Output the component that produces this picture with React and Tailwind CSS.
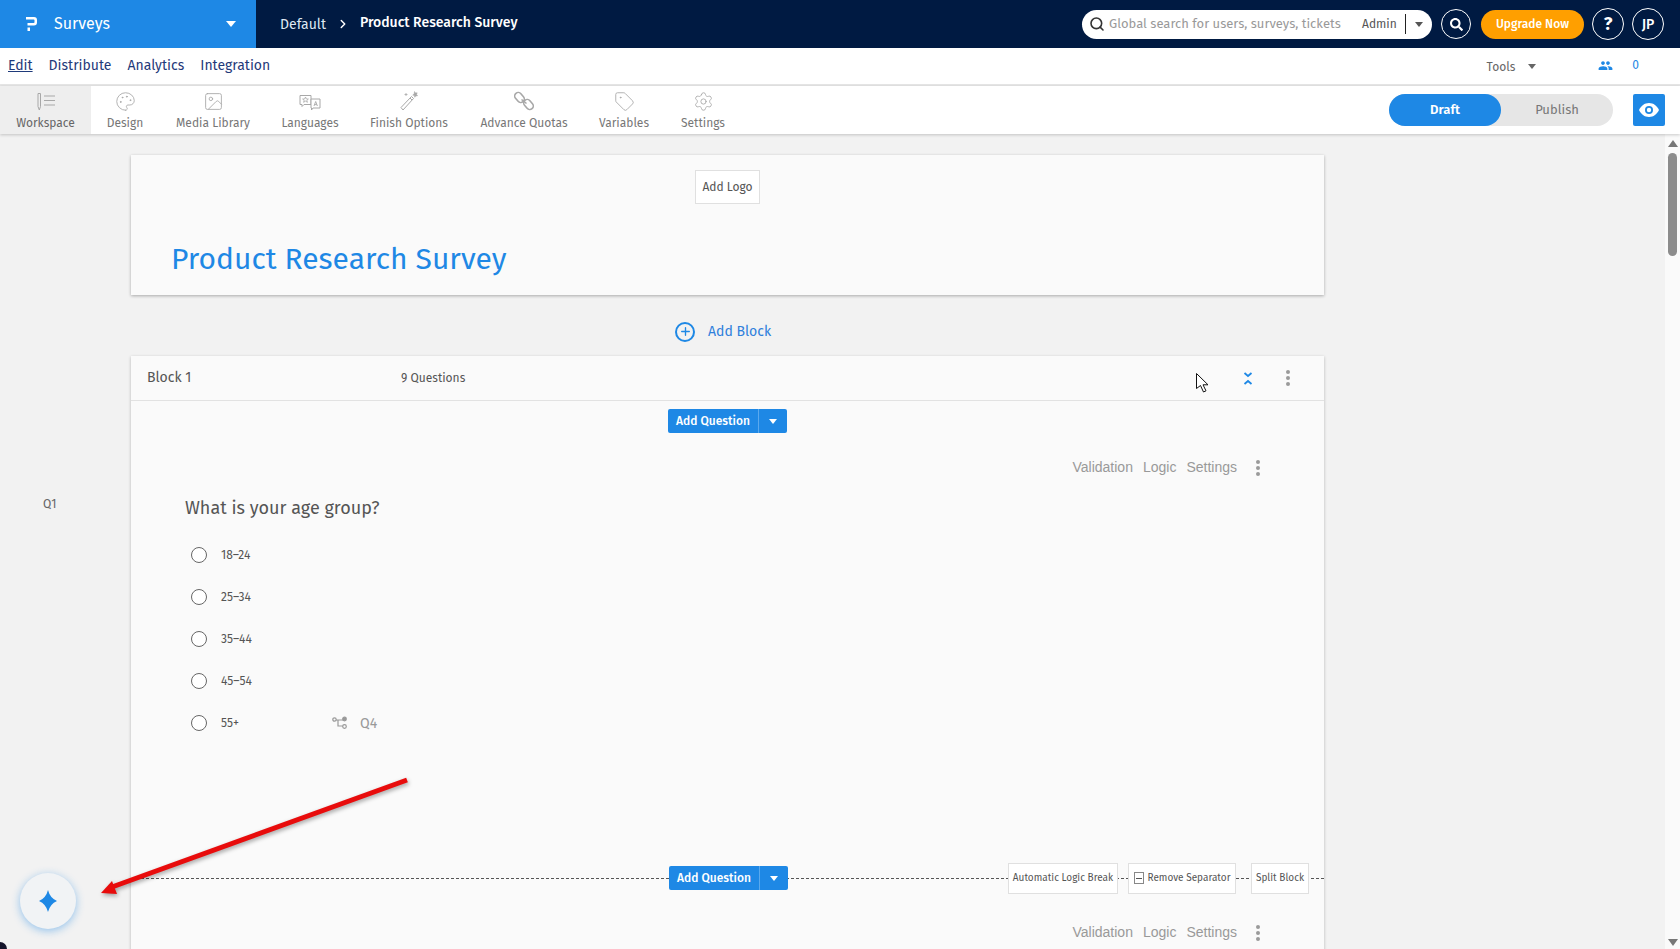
import { Search, ChevronRight, Palette, Image, Tag, Settings, Plus } from 'lucide-react';
import { FaSearch } from 'react-icons/fa';
import { MdPeople } from 'react-icons/md';

const font = "font-['Fira_Sans','Lato','Liberation_Sans',sans-serif]";

function LanguagesIcon() {
  return (
    <svg width="22" height="20" viewBox="0 0 22 20" fill="none" stroke="#a8a8a8" strokeWidth="1">
      <path d="M1 3.500h11v9H5l-2 2v-2H1z" />
      <path d="M6.500 5l.9 2h2l-1.600 1.300.6 2-1.900-1.200-1.900 1.200.6-2L3.600 7h2z" strokeWidth="0.8" />
      <path d="M12 7h9v9h-7l-1.500 2v-2H12z" fill="#fff" />
      <path d="M15 14l1.700-4.500 1.700 4.500M15.600 12.600h2.200" strokeWidth="0.9" />
    </svg>
  );
}

function WandIcon() {
  return (
    <svg width="20" height="22" viewBox="0 0 20 22" fill="none" stroke="#a8a8a8" strokeWidth="1">
      <path d="M2 17.500L12.500 6.500l2 2L4 20z" />
      <path d="M11 8l2 2" />
      <path d="M15.500 1.500l1 1.500 1.700-.2-.6 1.600 1 1.400-1.800.1-1 1.400-.5-1.700-1.600-.5 1.400-1z" fill="#a8a8a8" strokeWidth="0.5" />
      <path d="M7 3v3M5.500 4.500h3" strokeWidth="0.8" />
    </svg>
  );
}

function ChainIcon() {
  return (
    <svg width="20" height="22" viewBox="0 0 20 22" fill="none" stroke="#a8a8a8" strokeWidth="1.6">
      <rect x="2" y="2" width="7" height="11" rx="3.500" transform="rotate(-40 5.500 7.500)" />
      <rect x="11" y="9" width="7" height="11" rx="3.500" transform="rotate(-40 14.500 14.500)" />
      <path d="M7.500 9.500l5 4" />
    </svg>
  );
}

const tools = [
  { label: 'Design', w: 'w-[68px]', icon: <Palette size={21} strokeWidth={1} className="text-[#a8a8a8]" /> },
  { label: 'Media Library', w: 'w-[108px]', icon: <Image size={21} strokeWidth={1} className="text-[#a8a8a8]" /> },
  { label: 'Languages', w: 'w-[86px]', icon: <LanguagesIcon /> },
  { label: 'Finish Options', w: 'w-[112px]', icon: <WandIcon /> },
  { label: 'Advance Quotas', w: 'w-[118px]', icon: <ChainIcon /> },
  { label: 'Variables', w: 'w-[82px]', icon: <Tag size={21} strokeWidth={1} className="text-[#a8a8a8]" /> },
  { label: 'Settings', w: 'w-[76px]', icon: <Settings size={21} strokeWidth={1} className="text-[#a8a8a8]" /> },
];

const answers = ['18–24', '25–34', '35–44', '45–54', '55+'];

function Caret({ className = '' }) {
  return <span className={`inline-block w-0 h-0 border-x-[4px] border-x-transparent border-t-[5px] ${className}`} />;
}

function Kebab() {
  return (
    <span className="flex flex-col gap-[2px]">
      <span className="w-[4px] h-[4px] rounded-full bg-[#9a9a9a]" />
      <span className="w-[4px] h-[4px] rounded-full bg-[#9a9a9a]" />
      <span className="w-[4px] h-[4px] rounded-full bg-[#9a9a9a]" />
    </span>
  );
}

function AddQuestion() {
  return (
    <div className="flex w-[119px] h-[24px] bg-[#1e88e5] rounded-[2px] text-white text-[12px] items-center">
      <span className="w-[90px] text-center font-medium">Add Question</span>
      <span className="flex-1 h-full border-l border-[#5aa9ee] flex items-center justify-center">
        <Caret className="border-t-white" />
      </span>
    </div>
  );
}

function QuestionActions() {
  return (
    <div className="flex items-center justify-end pr-[64px] font-['Liberation_Sans',sans-serif] text-[14px] text-[#999]">
      <span>Validation</span>
      <span className="ml-[10px]">Logic</span>
      <span className="ml-[10px]">Settings</span>
      <span className="ml-[19px]"><Kebab /></span>
    </div>
  );
}

function WorkspaceIcon() {
  return (
    <svg width="20" height="21" viewBox="0 0 20 21" fill="none" stroke="#a8a8a8" strokeWidth="1">
      <path d="M2 2.500h2.500v13l-1.200 3.500L2 15.500z" />
      <path d="M8 5h11M8 9.500h11M8 14h11" />
    </svg>
  );
}

export default function App() {
  return (
    <div className={`${font} relative w-full h-[949px] overflow-hidden flex flex-col bg-[#f2f2f2]`}>
      <header className="h-[48px] shrink-0 flex items-center bg-[#001a42] text-white">
        <div className="w-[256px] h-full bg-[#1e88e5] flex items-center pl-[26px] pr-[20px]">
          <svg width="11" height="14" viewBox="0 0 11 14" fill="#fff">
            <path d="M0 0h8a3 3 0 0 1 3 3v2.500a3 3 0 0 1-3 3H1.500V6h6.200a.8.8 0 0 0 .8-.8V3.300a.8.8 0 0 0-.8-.8H0z" />
            <path d="M1.500 10.500h2.500V14H1.500z" />
          </svg>
          <span className="ml-[17px] text-[16px]">Surveys</span>
          <Caret className="ml-auto border-x-[5px] border-t-[6px] border-t-white" />
        </div>
        <span className="ml-[24px] text-[14px] text-[#dfe8f2]">Default</span>
        <ChevronRight size={14} strokeWidth={2.5} className="ml-[10px]" />
        <span className="ml-[10px] text-[14px] font-medium -mt-[3px]">Product Research Survey</span>
        <div className="ml-auto flex items-center w-[350px] h-[29px] bg-white rounded-full text-[13px] pl-[7px]">
          <Search size={16} strokeWidth={2.4} className="text-[#333]" />
          <span className="ml-[4px] w-[253px] text-[#999] whitespace-nowrap">Global search for users, surveys, tickets</span>
          <span className="text-[12px] text-[#555]">Admin</span>
          <span className="ml-[8px] w-px h-[20px] bg-[#222]" />
          <Caret className="ml-[9px] border-t-[#555]" />
        </div>
        <div className="ml-[9px] w-[30px] h-[30px] rounded-full border border-white flex items-center justify-center">
          <FaSearch size={13} />
        </div>
        <div className="ml-[10px] w-[103px] h-[29px] rounded-full bg-[#ff9f00] flex items-center justify-center text-[12px] font-medium">Upgrade Now</div>
        <div className="ml-[8px] w-[32px] h-[32px] rounded-full border border-white flex items-center justify-center text-[18px] font-bold">?</div>
        <div className="ml-[8px] mr-[16px] w-[32px] h-[32px] rounded-full border border-white flex items-center justify-center text-[14px] font-medium">JP</div>
      </header>

      <nav className="h-[38px] shrink-0 flex items-center bg-white border-b-2 border-[#e6e6e6] pb-[2px] text-[14px] text-[#1f3a7a]">
        <span className="ml-[8px] underline">Edit</span>
        <span className="ml-[16px]">Distribute</span>
        <span className="ml-[16px]">Analytics</span>
        <span className="ml-[16px]">Integration</span>
        <span className="ml-auto mt-[3px] text-[12px] text-[#666]">Tools</span>
        <Caret className="ml-[13px] mt-[2px] border-t-[#666]" />
        <MdPeople size={15} className="ml-[62px] text-[#1e88e5]" />
        <span className="ml-[19px] mr-[41px] text-[12px] text-[#1e88e5]">0</span>
      </nav>

      <div className="h-[48px] shrink-0 flex items-center bg-white shadow-[0_1px_3px_rgba(0,0,0,0.2)] z-10">
        <div className="w-[91px] h-full bg-[#eeeeee] flex flex-col items-center justify-end pb-[2px] text-[12px] text-[#666]">
          <WorkspaceIcon />
          <span className="mt-[2px] leading-[18px]">Workspace</span>
        </div>
        {tools.map(({ label, w, icon }) => (
          <div key={label} className={`${w} h-full flex flex-col items-center justify-end pb-[2px] text-[12px] text-[#777]`}>
            {icon}
            <span className="mt-[2px] leading-[18px]">{label}</span>
          </div>
        ))}
        <div className="ml-auto flex w-[224px] h-[32px] rounded-full bg-[#e6e6e6] text-[13px]">
          <span className="w-[112px] h-full rounded-full bg-[#1e88e5] text-white font-semibold flex items-center justify-center">Draft</span>
          <span className="flex-1 flex items-center justify-center text-[#777]">Publish</span>
        </div>
        <div className="ml-[20px] mr-[15px] w-[32px] h-[32px] rounded-[2px] bg-[#1e88e5] flex items-center justify-center">
          <svg width="20" height="14" viewBox="0 0 20 14" fill="#fff">
            <path d="M10 0C5.500 0 2 2.800 0 7c2 4.200 5.500 7 10 7s8-2.800 10-7c-2-4.200-5.500-7-10-7z" />
            <circle cx="10" cy="7" r="4" fill="#1e88e5" />
            <circle cx="10" cy="7" r="2.200" fill="#fff" />
          </svg>
        </div>
      </div>

      <main className="flex-1 min-h-0 flex">
        <div className="w-[131px] shrink-0 pt-[361px] pl-[43px] text-[12px] text-[#666]">Q1</div>
        <div className="w-[1193px] shrink-0 pt-[21px]">
          <section className="h-[140px] bg-[#fafafa] shadow-[0_1px_3px_rgba(0,0,0,0.3)] pt-[15px]">
            <div className="ml-[564px] w-[65px] h-[34px] bg-white border border-[#e0e0e0] flex items-center justify-center text-[12px] text-[#555]">Add Logo</div>
            <h1 className="mt-[33px] ml-[40px] text-[30px] leading-[44px] text-[#1e88e5]">Product Research Survey</h1>
          </section>
          <div className="h-[61px] flex items-center pt-[12px] pl-[544px] text-[14px] text-[#2f80dc]">
            <span className="w-[20px] h-[20px] rounded-full border-2 border-[#1e88e5] flex items-center justify-center">
              <Plus size={13} strokeWidth={2.5} className="text-[#1e88e5]" />
            </span>
            <span className="ml-[13px]">Add Block</span>
          </div>
          <section className="bg-[#fafafa] shadow-[0_1px_3px_rgba(0,0,0,0.25)] h-[600px]">
            <div className="h-[45px] flex items-center border-b border-[#e2e2e2] pl-[16px] text-[#555]">
              <span className="w-[254px] text-[14px] -mt-[2px]">Block 1</span>
              <span className="text-[12px]">9 Questions</span>
              <span className="ml-auto mr-[33px]">
                <svg width="10" height="13" viewBox="0 0 10 13" fill="none" stroke="#1e88e5" strokeWidth="1.800">
                  <path d="M1.500 1L5 4l3.500-3M1.500 12L5 9l3.500 3" />
                </svg>
              </span>
              <span className="mr-[34px]"><Kebab /></span>
            </div>
            <div className="flex justify-center pt-[8px]"><AddQuestion /></div>
            <div className="pt-[24px]"><QuestionActions /></div>
            <h2 className="mt-[18px] ml-[54px] text-[18px] leading-[24px] text-[#555]">What is your age group?</h2>
            <ul className="mt-[27px] ml-[60px] flex flex-col gap-[26px]">
              {answers.map((a) => (
                <li key={a} className="h-[16px] flex items-center text-[12px] text-[#555]">
                  <span className="w-[16px] h-[16px] rounded-full border border-[#666] bg-white" />
                  <span className="ml-[14px] w-[111px]">{a}</span>
                  {a === '55+' && (
                    <span className="flex items-center text-[#999] text-[14px]">
                      <svg width="16" height="14" viewBox="0 0 16 14" fill="none" stroke="#999" strokeWidth="1.200">
                        <circle cx="2.500" cy="3.500" r="1.700" />
                        <circle cx="12.500" cy="3" r="1.800" fill="#999" />
                        <circle cx="12.500" cy="10.500" r="1.800" />
                        <path d="M4 4h7M6 4.500v5.500h4.700" />
                      </svg>
                      <span className="ml-[12px]">Q4</span>
                    </span>
                  )}
                </li>
              ))}
            </ul>
            <div className="relative mt-[131px] h-[32px] flex items-center">
              <div className="w-full border-t border-dashed border-[#555]" />
              <div className="absolute inset-0 flex items-center">
                <div className="ml-[538px] bg-[#fafafa]"><AddQuestion /></div>
                <div className="ml-[220px] w-[110px] h-[31px] bg-white border border-[#e0e0e0] flex items-center justify-center text-[10px] text-[#555] whitespace-nowrap">Automatic Logic Break</div>
                <div className="ml-[10px] w-[108px] h-[31px] bg-white border border-[#e0e0e0] flex items-center justify-center text-[10px] text-[#555] whitespace-nowrap">
                  <span className="w-[10px] h-[12px] border border-[#888] flex items-center justify-center mr-[4px]"><span className="w-[6px] h-px bg-[#555]" /></span>
                  Remove Separator
                </div>
                <div className="ml-[15px] w-[58px] h-[31px] bg-white border border-[#e0e0e0] flex items-center justify-center text-[10px] text-[#555] whitespace-nowrap">Split Block</div>
              </div>
            </div>
            <div className="pt-[28px]"><QuestionActions /></div>
          </section>
        </div>
        <div className="ml-auto w-[15px] shrink-0 bg-[#fafafa] flex flex-col items-center pt-[6px]">
          <span className="w-0 h-0 border-x-[5px] border-x-transparent border-b-[7px] border-b-[#777]" />
          <span className="mt-[6px] w-[9px] h-[103px] rounded-full bg-[#8c8c8c]" />
          <span className="mt-auto mb-[3px] w-0 h-0 border-x-[5px] border-x-transparent border-t-[7px] border-t-[#777]" />
        </div>
      </main>

      {/* red arrow drawn over the screenshot */}
      <svg className="absolute left-0 top-0 pointer-events-none drop-shadow-[1px_2px_2px_rgba(0,0,0,0.35)]" width="1680" height="949" viewBox="0 0 1680 949">
        <path d="M407 780 L112 887" stroke="#e80c0c" strokeWidth="5" fill="none" />
        <path d="M101 893 L112 881 L117 894 Z" fill="#e80c0c" />
      </svg>

      {/* mouse pointer */}
      <svg className="absolute left-[1196px] top-[373px]" width="13" height="20" viewBox="0 0 13 20" fill="#fff" stroke="#111" strokeWidth="1">
        <path d="M.5.500V15.500l4-3 3 6.500 2.500-1.200-3-6h5z" />
      </svg>

      <button className="absolute left-[20px] top-[873px] w-[56px] h-[56px] rounded-full bg-[#f1f3f5] shadow-[0_2px_8px_rgba(30,136,229,0.45)] flex items-center justify-center">
        <svg width="18" height="22" viewBox="0 0 18 22" fill="#1e88e5">
          <path d="M9 0Q11 8 18 11 11 14 9 22 7 14 0 11 7 8 9 0z" />
        </svg>
      </button>

      <span className="absolute left-0 bottom-0 w-[7px] h-[7px] bg-[#14142a] rounded-tr-[7px]" />
    </div>
  );
}
